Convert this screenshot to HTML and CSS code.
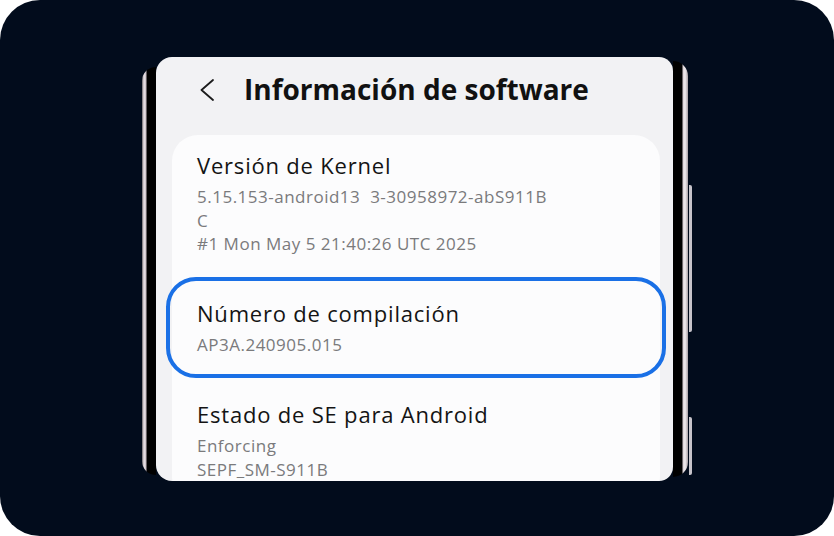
FILE: index.html
```html
<!DOCTYPE html>
<html lang="es">
<head>
    <meta charset="UTF-8">
    <meta name="viewport" content="width=device-width, initial-scale=1.0">
    <title>Información de software</title>
    <link rel="stylesheet" href="styles.css">
</head>
<body>

    <div class="stage">
        <div class="phone">
            <div class="bezel bezel-left"></div>

            <div class="screen">
                <header class="top-bar">
                    <svg class="back-icon" width="14" height="22" viewBox="0 0 14 22">
                        <polyline points="13,1 1.5,11 13,21" fill="none" stroke="#1c1c1c" stroke-width="1.8" stroke-linecap="round" stroke-linejoin="round"/>
                    </svg>
                    <h1>Información de software</h1>
                </header>

                <div class="card">
                    <div class="item item-first">
                        <div class="item-title">Versión de Kernel</div>
                        <div class="item-sub">
                            <div>5.15.153-android13&nbsp; 3-30958972-abS911B</div>
                            <div>C</div>
                            <div>#1 Mon May 5 21:40:26 UTC 2025</div>
                        </div>
                    </div>

                    <!-- Highlighted row -->
                    <div class="item item-selected">
                        <div class="item-title">Número de compilación</div>
                        <div class="item-sub">
                            <div>AP3A.240905.015</div>
                        </div>
                    </div>

                    <div class="item">
                        <div class="item-title">Estado de SE para Android</div>
                        <div class="item-sub">
                            <div>Enforcing</div>
                            <div>SEPF_SM-S911B</div>
                        </div>
                    </div>
                </div>
            </div>

            <div class="bezel bezel-right"></div>

            <!-- Side keys -->
            <span class="side-key key-volume"></span>
            <span class="side-key key-power"></span>
        </div>
    </div>

</body>
</html>
```

FILE: styles.css
```css
html, body {
    margin: 0;
    padding: 0;
    background: #ffffff;
    font-family: "Open Sans", Roboto, sans-serif;
}

.stage {
    width: 834px;
    height: 536px;
    box-sizing: border-box;
    padding: 57px 0 0 142px;
    background: #020c1c;
    border-radius: 40px;
    display: flex;
    align-items: flex-start;
    overflow: hidden;
}

/* Phone body */
.phone {
    position: relative;
    width: 546px;
    height: 424px;
    display: flex;
}

.bezel {
    flex: none;
}

.bezel-left {
    width: 14px;
    margin-top: 10px;
    margin-bottom: 6px;
    border-radius: 14px 0 0 14px;
    background: linear-gradient(to right, #6a6468 0, #efe8ec 2px, #c9bfc5 4px, #000 5px, #000 14px);
}

.bezel-right {
    width: 15px;
    margin-top: 4px;
    margin-bottom: 4px;
    border-radius: 0 16px 16px 0;
    background: linear-gradient(to right, #000 0, #000 9px, #d8cfd4 10px, #f3eef1 12px, #a79ea3 15px);
}

.side-key {
    position: absolute;
    left: 547px;
    width: 3px;
    background: #c7c4ca;
    border-radius: 0 2px 2px 0;
}

.key-volume {
    top: 128px;
    height: 147px;
}

.key-power {
    top: 360px;
    height: 58px;
}

/* Screen */
.screen {
    flex: 1;
    background: #f2f2f4;
    border-radius: 16px 14px 14px 16px;
    overflow: hidden;
}

.top-bar {
    height: 78px;
    box-sizing: border-box;
    padding: 0 0 14px 44px;
    display: flex;
    align-items: center;
    gap: 30px;
}

.back-icon {
    flex: none;
    margin-top: 2px;
}

.top-bar h1 {
    margin: 0;
    font-size: 28px;
    line-height: 34px;
    font-weight: 700;
    color: #111111;
    letter-spacing: 0;
}

.card {
    margin: 0 13px 0 16px;
    background: #fcfcfd;
    border-radius: 26px;
    display: flex;
    flex-direction: column;
}

.item {
    padding: 21px 25px;
}

.item-first {
    padding-top: 15px;
}

.item-selected {
    margin: 0 -6px;
    padding: 17px 27px 18px;
    border: 4px solid #1a70e6;
    border-radius: 30px;
}

.item-title {
    font-size: 22px;
    line-height: 30px;
    color: #141414;
    letter-spacing: 0.8px;
}

.item-sub {
    margin-top: 5px;
    font-size: 17px;
    line-height: 23.5px;
    color: #7a7a7c;
    letter-spacing: 0.5px;
}
```
